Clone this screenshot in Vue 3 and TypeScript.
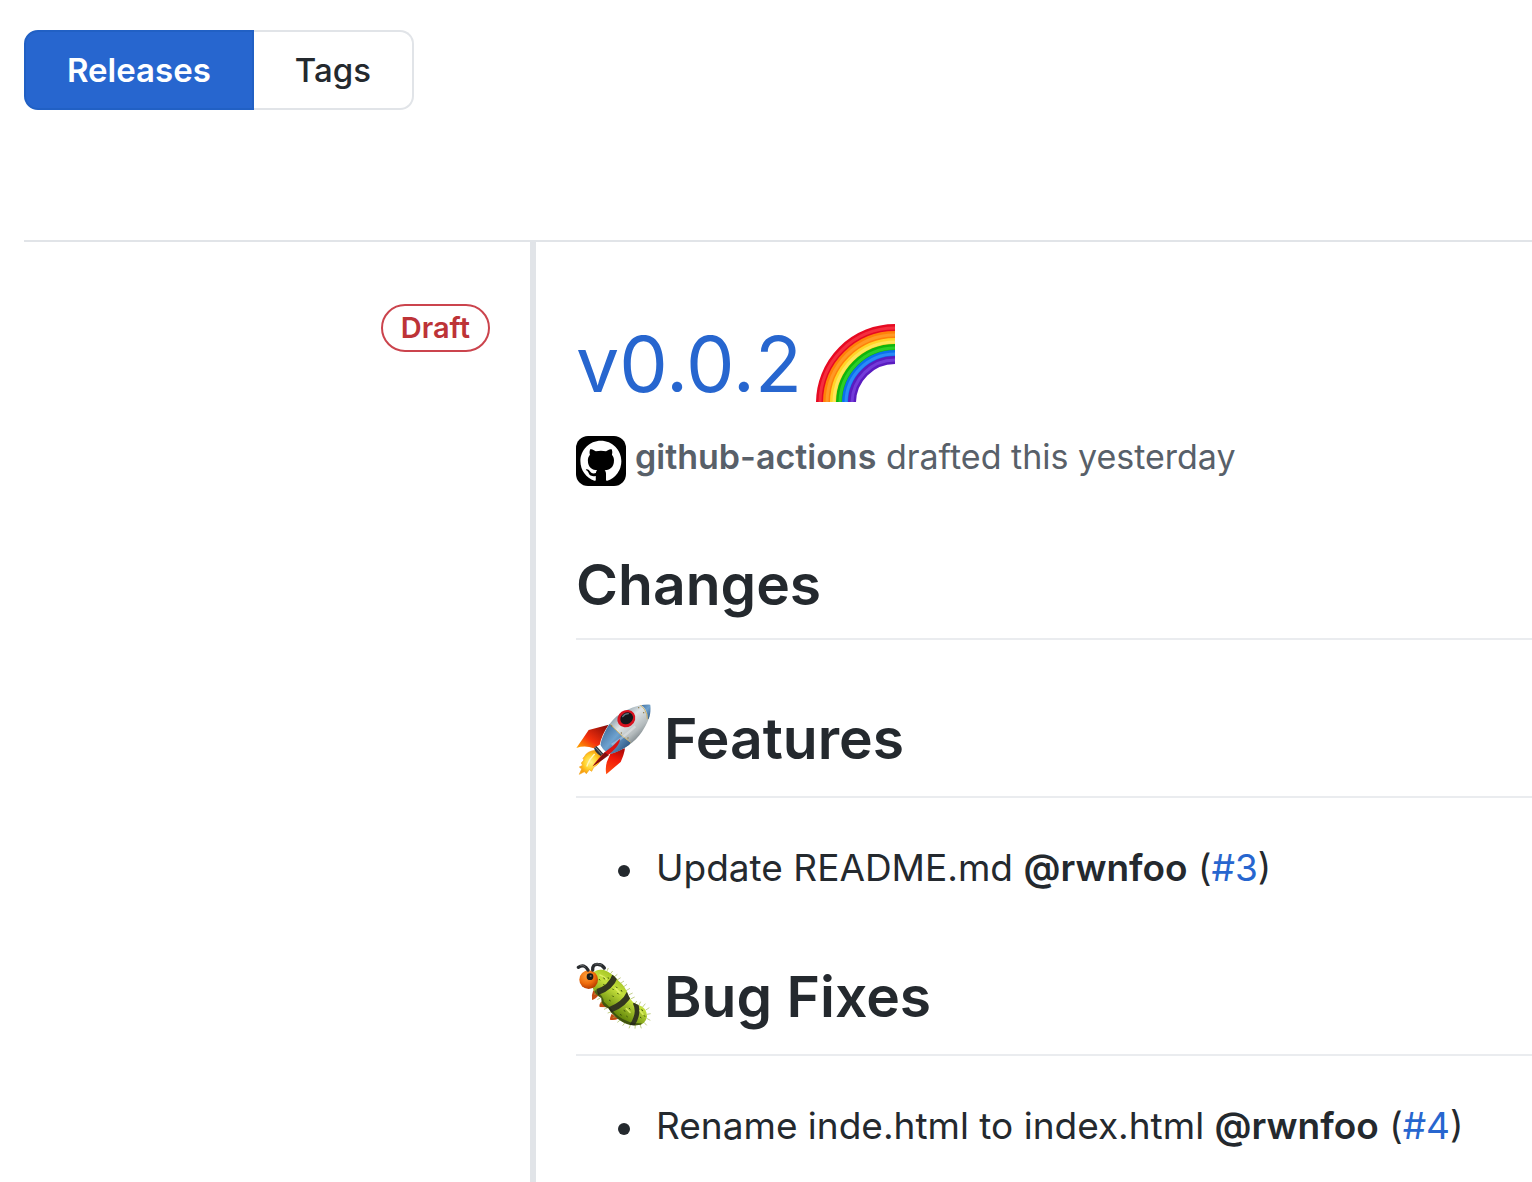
<script setup lang="ts">
interface Entry {
  text: string
  author: string
  issue: string
}

interface Section {
  icon: 'rocket' | 'bug'
  title: string
  entries: Entry[]
}

const sections: Section[] = [
  {
    icon: 'rocket',
    title: 'Features',
    entries: [{ text: 'Update README.md', author: '@rwnfoo', issue: '#3' }],
  },
  {
    icon: 'bug',
    title: 'Bug Fixes',
    entries: [{ text: 'Rename inde.html to index.html', author: '@rwnfoo', issue: '#4' }],
  },
]

const rainbow = [
  { r: 75, color: '#e60a22', shine: '#ff4652' },
  { r: 68, color: '#ff8208', shine: '#ffa838' },
  { r: 61, color: '#ffd528', shine: '#fff07a' },
  { r: 55, color: '#0fb50c', shine: '#3fe03a' },
  { r: 49, color: '#0a70ec', shine: '#3f9cff' },
  { r: 43, color: '#5a1cc0', shine: '#8450ea' },
]

// Short hairs standing out from both sides of the caterpillar
const hairs: string =
  'M112 62l2-10M122 68l5-11M132 76l8-10M144 84l10-8M152 94l12-8M162 104l12-8M172 114l11-8M180 125l12-7M188 138l12-6M194 150l12-6M206 166l6-10M218 170l6-12M230 174l8-10M238 184l12-8M242 196l12-2M242 208l11 6M234 220l8 9M222 226l4 12M208 228l-1 11M194 226l-5 12M178 220l-8 10M164 212l-10 8M152 202l-12 4M138 188l-13 4M126 176l-12 5M114 160l-12 3M104 146l-10 6M96 132l-12 4'
</script>

<template>
  <div class="page">
    <nav class="tabs" aria-label="Releases and tags">
      <a class="tab selected" href="#releases" aria-current="page">Releases</a>
      <a class="tab" href="#tags">Tags</a>
    </nav>

    <main class="release">
      <aside class="side">
        <span class="label">Draft</span>
      </aside>

      <article class="body">
        <h1 class="title">
          <a href="#v0.0.2">v0.0.2</a>
          <svg class="rainbow" viewBox="0 0 80 80" role="img" aria-label="rainbow">
            <defs>
              <clipPath id="sky"><path d="M0 0H79V78H0Z" /></clipPath>
            </defs>
            <g fill="none" clip-path="url(#sky)">
              <circle v-for="b in rainbow" :key="b.color" cx="79" cy="79" :r="b.r" :stroke="b.color" stroke-width="8" />
              <circle
                v-for="b in rainbow"
                :key="b.shine"
                cx="79"
                cy="79"
                :r="b.r"
                :stroke="b.shine"
                stroke-width="3"
                opacity="0.6"
              />
            </g>
          </svg>
        </h1>

        <p class="meta">
          <svg class="avatar" viewBox="0 0 50 50" role="img" aria-label="github-actions">
            <rect width="50" height="50" rx="12" fill="#000" />
            <path
              transform="translate(4.4 4.8) scale(2.56)"
              fill="#fff"
              d="M8 0C3.58 0 0 3.58 0 8c0 3.54 2.29 6.53 5.47 7.59.4.07.55-.17.55-.38 0-.19-.01-.82-.01-1.49-2.01.37-2.53-.49-2.69-.94-.09-.23-.48-.94-.82-1.13-.28-.15-.68-.52-.01-.53.63-.01 1.08.58 1.23.82.72 1.21 1.87.87 2.33.66.07-.52.28-.87.51-1.07-1.78-.2-3.64-.89-3.64-3.95 0-.87.31-1.59.82-2.15-.08-.2-.36-1.02.08-2.12 0 0 .67-.21 2.2.82.64-.18 1.32-.27 2-.27.68 0 1.36.09 2 .27 1.53-1.04 2.2-.82 2.2-.82.44 1.1.16 1.92.08 2.12.51.56.82 1.27.82 2.15 0 3.07-1.87 3.75-3.65 3.95.29.25.54.73.54 1.48 0 1.07-.01 1.93-.01 2.2 0 .21.15.46.55.38A8.013 8.013 0 0016 8c0-4.42-3.58-8-8-8z"
            />
          </svg>
          <span><a class="author" href="#github-actions">github-actions</a> drafted this yesterday</span>
        </p>

        <h2 class="heading">Changes</h2>

        <section v-for="s in sections" :key="s.title">
          <h2 class="heading with-icon">
            <svg v-if="s.icon === 'rocket'" class="emoji" viewBox="30 36 228 216" aria-hidden="true">
              <defs>
                <linearGradient id="fin" x1="0" y1="1" x2="1" y2="0">
                  <stop offset="0" stop-color="#ffb000" />
                  <stop offset="0.4" stop-color="#f5300c" />
                  <stop offset="1" stop-color="#7e0808" />
                </linearGradient>
                <linearGradient id="fin-low" x1="0.3" y1="1" x2="0.6" y2="0">
                  <stop offset="0" stop-color="#ff4a10" />
                  <stop offset="0.6" stop-color="#f01808" />
                  <stop offset="1" stop-color="#b00a08" />
                </linearGradient>
                <linearGradient id="hull" x1="0.25" y1="0.2" x2="0.75" y2="0.75">
                  <stop offset="0" stop-color="#66808f" />
                  <stop offset="0.4" stop-color="#dfe4e6" />
                  <stop offset="0.7" stop-color="#b4bbbd" />
                  <stop offset="1" stop-color="#5f6a70" />
                </linearGradient>
                <linearGradient id="steel" x1="0.1" y1="0.1" x2="0.9" y2="0.9">
                  <stop offset="0" stop-color="#2f5c8a" />
                  <stop offset="0.5" stop-color="#6fa2cf" />
                  <stop offset="1" stop-color="#1d4674" />
                </linearGradient>
                <radialGradient id="flame">
                  <stop offset="0" stop-color="#fff58a" />
                  <stop offset="0.6" stop-color="#ffd02a" />
                  <stop offset="1" stop-color="#f8a010" />
                </radialGradient>
                <clipPath id="rocket-body">
                  <path d="M253 41C230 37 186 49 152 76C126 99 110 132 103 161Q118 188 137 188C168 179 208 153 228 122C248 93 257 65 253 41Z" />
                </clipPath>
              </defs>
              <path fill="url(#fin)" d="M128 101L68 117Q52 141 31 171Q58 162 83 172L101 161Q107 132 128 101Z" />
              <path fill="url(#fin-low)" d="M177 172Q175 189 164 213Q145 229 121 250Q116 225 126 205L135 184Z" />
              <path
                fill="url(#flame)"
                stroke="#f5a31b"
                stroke-width="2"
                d="M88 178Q63 181 56 196L51 202L54 207L46 216L50 223L40 228L47 234L40 250L55 242L61 248L70 236L77 241L83 229Q106 216 109 194Z"
              />
              <path fill="none" stroke="#fff8c0" stroke-width="4" stroke-linecap="round" d="M85 190Q69 206 63 225" />
              <path fill="#30343a" d="M91 165L113 189L104 195Q87 185 84 171Z" />
              <path fill="none" stroke="#8a9098" stroke-width="3" d="M88 169L108 191" />
              <g clip-path="url(#rocket-body)">
                <path fill="url(#hull)" d="M90 30H270V200H90Z" />
                <path fill="url(#steel)" d="M100 85L132 98Q160 132 194 154L170 205H90Z" />
                <path fill="url(#steel)" d="M216 36Q247 52 245 85L270 75V25Z" />
                <path fill="none" stroke="#cdb36b" stroke-width="3" d="M132 98Q160 132 194 154M216 38Q243 52 244 85" />
                <path fill="none" stroke="#fff" stroke-width="7" opacity="0.3" d="M137 161Q162 148 208 106" />
              </g>
              <ellipse cx="181" cy="83" rx="28" ry="25" transform="rotate(-35 181 83)" fill="#d81320" />
              <ellipse cx="182" cy="82" rx="20" ry="17" transform="rotate(-35 182 82)" fill="#15171b" />
              <path fill="none" stroke="#64757f" stroke-width="4" stroke-linecap="round" d="M170 77Q176 68 187 68" />
              <path fill="#d91514" d="M161 144Q164 151 151 169Q128 196 80 226Q92 207 116 184Q143 166 161 144Z" />
              <path fill="#5f0b0b" opacity="0.7" d="M116 184L80 226L109 207L129 193Z" />
              <g fill="#89713c">
                <circle cx="137" cy="105" r="2" />
                <circle cx="166" cy="126" r="2" />
                <circle cx="186" cy="141" r="2" />
                <circle cx="218" cy="50" r="2" />
                <circle cx="233" cy="65" r="2" />
              </g>
            </svg>

            <svg v-else class="emoji" viewBox="30 36 228 216" aria-hidden="true">
              <defs>
                <radialGradient id="head" cx="0.4" cy="0.3" r="0.7">
                  <stop offset="0" stop-color="#ffa13a" />
                  <stop offset="0.6" stop-color="#ee6c0c" />
                  <stop offset="1" stop-color="#b83c00" />
                </radialGradient>
                <linearGradient id="skin" x1="0.7" y1="0.2" x2="0.35" y2="0.7">
                  <stop offset="0" stop-color="#8aac13" />
                  <stop offset="0.5" stop-color="#c5e13c" />
                  <stop offset="1" stop-color="#688b0c" />
                </linearGradient>
                <clipPath id="worm">
                  <path d="M82 69Q105 54 127 69Q145 79 158 96Q178 111 188 141Q198 162 216 167Q244 176 243 203Q239 227 212 229Q184 231 155 209Q136 194 127 178Q105 169 106 147Q86 136 81 119Z" />
                </clipPath>
              </defs>
              <g fill="#c44b13">
                <path d="M82 124Q76 137 78 153Q90 150 101 134Z" />
                <path d="M108 157Q98 165 101 174L128 175Z" />
                <path d="M137 194Q131 207 132 212Q144 215 157 209Z" />
              </g>
              <path :d="hairs" fill="none" stroke="#a1b54b" stroke-width="2" />
              <g clip-path="url(#worm)">
                <path fill="url(#skin)" d="M70 50H260V240H70Z" />
                <g fill="none" stroke="#33371f" stroke-width="18">
                  <path d="M148 79Q135 117 94 129" />
                  <path d="M191 132Q176 166 131 183" />
                  <path d="M207 160Q224 194 195 233" stroke-width="14" />
                </g>
                <path fill="none" stroke="#1d2410" stroke-width="10" opacity="0.55" d="M87 126Q112 150 108 160Q128 178 145 198Q180 230 227 228" />
                <g fill="none" stroke="#e4f26c" stroke-width="5" stroke-linecap="round" opacity="0.8">
                  <path d="M102 78Q115 82 121 91M149 118L161 132M181 179L192 190M222 185L231 196" />
                </g>
                <path
                  fill="none"
                  stroke="#39500b"
                  stroke-width="3"
                  d="M99 90l3 4M113 86l3 5M112 105l4 4M126 85l2 4M139 119l4 4M150 113l4 4M154 132l4 4M139 140l4 4M165 123l3 5M129 153l5 3M173 184l5 3M162 196l5 3M189 177l4 4M181 201l4 3M227 181l3 5M222 204l4 3M234 199l3 4"
                />
              </g>
              <circle cx="68" cy="92" r="28" fill="url(#head)" />
              <circle cx="72" cy="83" r="10" fill="#17191a" />
              <circle cx="74" cy="81" r="3" fill="#6b6865" />
              <g fill="none" stroke="#292c2f" stroke-width="10" stroke-linecap="round">
                <path d="M66 63Q55 43 37 55" />
                <path d="M80 63Q79 45 95 46Q108 46 115 57" />
              </g>
              <path fill="none" stroke="#777b7d" stroke-width="2" stroke-linecap="round" d="M43 49Q52 46 58 54M87 45Q97 42 107 48" />
            </svg>
            {{ s.title }}
          </h2>
          <ul class="entries">
            <li v-for="e in s.entries" :key="e.issue">
              {{ e.text }} <a class="mention" href="#rwnfoo">{{ e.author }}</a> (<a class="issue" :href="e.issue">{{ e.issue }}</a>)
            </li>
          </ul>
        </section>
      </article>
    </main>
  </div>
</template>

<style>
body {
  background: #fff;
}
</style>

<style scoped>
.page {
  box-sizing: border-box;
  display: flex;
  flex-direction: column;
  min-height: 100vh;
  padding: 30px 0 0 24px;
  color: #24292e;
  font-family: Inter, "Liberation Sans", sans-serif;
  font-size: 37px;
}

a {
  color: #2766cf;
  text-decoration: none;
}

.tabs {
  display: flex;
  margin-bottom: 130px;
}

.tab {
  box-sizing: border-box;
  height: 80px;
  padding: 0 41px;
  border: 2px solid #e1e4e8;
  border-left: 0;
  border-radius: 0 14px 14px 0;
  color: #24292e;
  font-size: 33px;
  font-weight: 500;
  line-height: 76px;
}

.tab.selected {
  border: 2px solid #2160c4;
  border-radius: 14px 0 0 14px;
  background: #2766cf;
  color: #fff;
  font-weight: 600;
}

.release {
  display: grid;
  flex: 1;
  grid-template-columns: 506px 1fr;
  border-top: 2px solid #e1e4e8;
}

.side {
  display: flex;
  align-items: flex-start;
  justify-content: flex-end;
  padding: 62px 40px 0 0;
}

.label {
  padding: 0 18px;
  border: 2px solid #cb444d;
  border-radius: 24px;
  color: #bd3337;
  font-size: 29px;
  font-weight: 600;
  line-height: 44px;
}

.body {
  min-width: 0;
  padding: 72px 0 10px 40px;
  border-left: 6px solid #e1e4e8;
}

.title {
  display: flex;
  align-items: center;
  gap: 14px;
  margin: 0 0 16px;
  font-size: 77px;
  font-weight: 400;
  line-height: 100px;
}

.rainbow {
  width: 80px;
  height: 80px;
}

.meta {
  display: flex;
  gap: 9px;
  margin: 0 0 62px;
  color: #586069;
  font-size: 34px;
  line-height: 54px;
}

.avatar {
  flex: none;
  width: 50px;
  height: 50px;
  margin-top: 6px;
}

.author {
  color: #586069;
  font-weight: 600;
}

.heading {
  margin: 0;
  padding-bottom: 16px;
  border-bottom: 2px solid #eaecef;
  font-size: 57px;
  font-weight: 600;
  line-height: 74px;
}

.with-icon {
  display: flex;
  align-items: center;
  gap: 12px;
  margin-top: 60px;
  padding-bottom: 18px;
  line-height: 78px;
}

.emoji {
  width: 76px;
  height: 72px;
}

.entries {
  margin: 40px 0 0;
  padding-left: 80px;
  line-height: 60px;
  list-style: none;
}

.entries li::before {
  content: "";
  display: inline-block;
  width: 12px;
  height: 12px;
  margin: 0 26px 0 -38px;
  border-radius: 50%;
  background: #24292e;
  vertical-align: middle;
}

.mention {
  color: #24292e;
  font-weight: 600;
}
</style>
